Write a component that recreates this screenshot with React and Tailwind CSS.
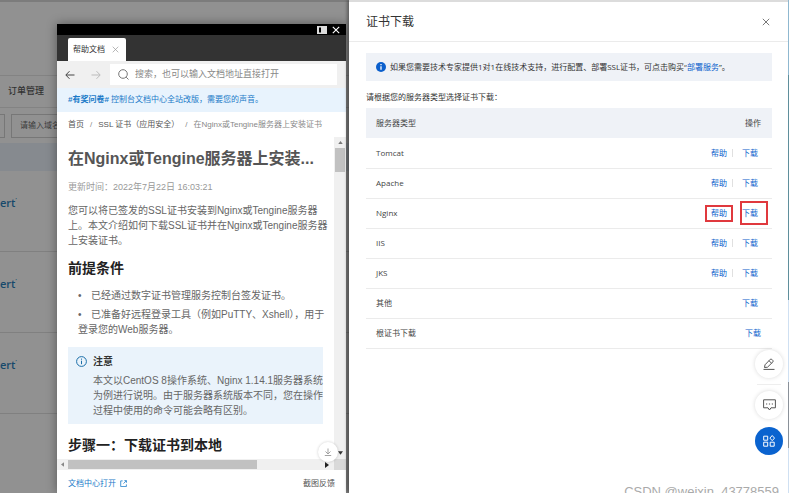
import React from "react";

const rows = [
  { name: "Tomcat", help: true },
  { name: "Apache", help: true },
  { name: "Nginx", help: true, marked: true },
  { name: "IIS", help: true },
  { name: "JKS", help: true },
  { name: "其他" },
  { name: "根证书下载", flush: true },
];

function CloseIcon({ className }) {
  return (
    <svg viewBox="0 0 10 10" className={className} fill="none" stroke="currentColor" aria-hidden="true">
      <path d="M1 1l8 8M9 1l-8 8" />
    </svg>
  );
}

function ConsolePage() {
  return (
    <div className="flex h-full flex-col bg-[#919191] text-[#333]">
      <div className="h-[75px] shrink-0 border-t-2 border-[#7c7c7c]" />
      <nav className="flex h-[33px] shrink-0 items-center border-y border-[#838383] pl-2 text-[9px] font-medium">
        <a href="#orders">订单管理</a>
      </nav>
      <div className="flex h-[35px] shrink-0 items-center gap-[6px]">
        <div className="h-6 w-[5px] border border-l-0 border-[#777]" />
        <input
          aria-label="域名"
          placeholder="请输入域名"
          className="h-6 w-40 border border-[#777] pl-2 text-[8px] placeholder:text-[#3c3c3c]"
        />
      </div>
      <div className="h-7 shrink-0 bg-[#868a8f]" />
      {["a", "b", "c"].map((k) => (
        <div
          key={k}
          className="flex h-[81px] shrink-0 items-center border-b border-[#808080] pb-4 font-['Open_Sans',sans-serif] text-[11px] font-semibold text-[#17496b]"
        >
          ert<sup className="text-[6px]">’</sup>
        </div>
      ))}
    </div>
  );
}

function HelpWindow() {
  return (
    <section className="absolute bottom-0 left-[57px] top-6 flex w-[289px] flex-col bg-white shadow-[0_0_10px_rgba(0,0,0,0.4)]">
      <div className="flex h-[11px] shrink-0 items-center justify-end gap-[5px] bg-black pr-[6px] text-white">
        <button aria-label="停靠">
          <svg viewBox="0 0 10 8" className="block h-2 w-[10px]" aria-hidden="true">
            <rect x="0" y="0" width="10" height="8" fill="#ddd" />
            <rect x="2" y="1.500" width="2" height="5" fill="#000" />
          </svg>
        </button>
        <button aria-label="关闭窗口">
          <CloseIcon className="block h-2 w-2 stroke-[1.4]" />
        </button>
      </div>
      <div className="flex h-[26px] shrink-0 items-end bg-[#333] pl-[11px]">
        <div className="flex h-[23px] w-[58px] items-center justify-between rounded-t-[2px] bg-white pl-[5px] pr-[7px] text-[8px] text-[#333]">
          <span>帮助文档</span>
          <button aria-label="关闭标签" className="text-[#999]">
            <CloseIcon className="block h-[7px] w-[7px]" />
          </button>
        </div>
      </div>
      <div className="flex h-[27px] shrink-0 items-center bg-[#f0f0f0] pl-2 pr-[9px]">
        <button aria-label="后退" className="text-[#444]">
          <svg viewBox="0 0 10 10" className="h-[10px] w-[10px]" fill="none" stroke="currentColor">
            <path d="M9.5 5H1M4.5 1.2L.8 5l3.7 3.8" />
          </svg>
        </button>
        <button aria-label="前进" className="ml-4 text-[#bbb]">
          <svg viewBox="0 0 10 10" className="h-[10px] w-[10px]" fill="none" stroke="currentColor">
            <path d="M.5 5H9M5.5 1.2L9.2 5 5.5 8.800" />
          </svg>
        </button>
        <label className="ml-[9px] flex h-[21px] flex-1 items-center bg-white pl-2">
          <svg viewBox="0 0 11 11" className="h-[11px] w-[11px] shrink-0 text-[#777]" fill="none" stroke="currentColor">
            <circle cx="5" cy="5" r="4.3" />
            <path d="M8.200 8.200L10.500 10.500" />
          </svg>
          <input
            aria-label="搜索"
            placeholder="搜索，也可以输入文档地址直接打开"
            className="ml-[6px] min-w-0 flex-1 text-[9px] outline-none placeholder:text-[#888]"
          />
        </label>
      </div>
      <a href="#survey" className="flex h-6 shrink-0 items-center bg-[#e8f3fd] pl-[11px] text-[8px] text-[#1a7ac8]">
        <b className="mr-[2px]">#有奖问卷#</b>控制台文档中心全站改版，需要您的声音。
      </a>
      <nav className="flex h-[25px] shrink-0 items-center gap-[6px] whitespace-nowrap pl-[11px] text-[8px] text-[#555]">
        <a href="#home">首页</a>
        <span className="text-[#888]">/</span>
        <a href="#ssl">SSL 证书（应用安全）</a>
        <span className="text-[#888]">/</span>
        <span className="text-[#888]">在Nginx或Tengine服务器上安装证书</span>
      </nav>
      <div className="flex min-h-0 flex-1">
        <article className="min-w-0 flex-1 overflow-hidden pl-[11px] pt-[10px] text-[10px] leading-[15px] text-[#666]">
          <h1 className="whitespace-nowrap text-base font-bold leading-6 text-[#555]">在Nginx或Tengine服务器上安装...</h1>
          <p className="mt-2 text-[9px] leading-4 text-[#999]">更新时间：2022年7月22日 16:03:21</p>
          <p className="mt-2 whitespace-nowrap">
            您可以将已签发的SSL证书安装到Nginx或Tengine服务器
            <br />
            上。本文介绍如何下载SSL证书并在Nginx或Tengine服务器
            <br />
            上安装证书。
          </p>
          <h2 className="mt-2 text-sm font-bold leading-6 text-[#222]">前提条件</h2>
          <ul className="mt-2 flex flex-col gap-1 whitespace-nowrap pl-[10px]">
            <li>
              <span className="inline-block w-[13px]">•</span>已经通过数字证书管理服务控制台签发证书。
            </li>
            <li>
              <span className="inline-block w-[13px]">•</span>已准备好远程登录工具（例如PuTTY、Xshell），用于
              <br />
              登录您的Web服务器。
            </li>
          </ul>
          <div className="mr-[11px] mt-[10px] flex gap-[6px] whitespace-nowrap bg-[#eaf3fb] pb-[6px] pl-2 pt-[7px]">
            <svg viewBox="0 0 11 11" className="mt-[2px] h-[11px] w-[11px] shrink-0 text-[#1a6ea8]" fill="none" stroke="currentColor">
              <circle cx="5.5" cy="5.5" r="4.900" />
              <path d="M5.500 4.700v3.500M5.500 2.600v1.100" />
            </svg>
            <div>
              <p className="font-bold text-[#333]">注意</p>
              <p className="mt-1">
                本文以CentOS 8操作系统、Nginx 1.14.1服务器系统
                <br />
                为例进行说明。由于服务器系统版本不同，您在操作
                <br />
                过程中使用的命令可能会略有区别。
              </p>
            </div>
          </div>
          <h2 className="mt-[9px] whitespace-nowrap text-sm font-bold leading-6 text-[#222]">步骤一：下载证书到本地</h2>
        </article>
        <div className="flex w-[12px] shrink-0 flex-col items-center bg-[#f0f0f0]">
          <svg viewBox="0 0 6 4" className="my-1 h-[3px] w-[5px]" aria-hidden="true">
            <path d="M0 4l3-4 3 4z" fill="#777" />
          </svg>
          <div className="h-6 w-[10px] bg-[#c1c1c1]" />
          <svg viewBox="0 0 6 4" className="mb-1 mt-auto h-1 w-[5px]" aria-hidden="true">
            <path d="M0 0l3 4 3-4z" fill="#333" />
          </svg>
        </div>
      </div>
      <div className="flex h-[11px] shrink-0 items-center bg-[#f0f0f0] pl-1">
        <svg viewBox="0 0 4 6" className="h-[5px] w-[3px]" aria-hidden="true">
          <path d="M4 0L0 3l4 3z" fill="#888" />
        </svg>
        <div className="ml-1 h-[9px] w-[189px] bg-[#c1c1c1]" />
        <svg viewBox="0 0 4 6" className="ml-auto h-[6px] w-1" aria-hidden="true">
          <path d="M0 0l4 3-4 3z" fill="#222" />
        </svg>
        <div className="ml-[5px] h-full w-[12px] bg-[#d9d9d9]" />
      </div>
      <footer className="flex h-[23px] shrink-0 items-center justify-between px-[11px] pt-1 text-[8px]">
        <a href="#docs" className="flex items-center gap-1 text-[#1a7ac8]">
          文档中心打开
          <svg viewBox="0 0 8 8" className="h-[7px] w-[7px]" fill="none" stroke="currentColor" strokeWidth="0.900">
            <path d="M3 1H.8v6.500h6.500V5M5 .7h2.400v2.400M7.200.9L4 4.100" />
          </svg>
        </a>
        <button className="text-[#555]">截图反馈</button>
      </footer>
      <button
        aria-label="滚动到底部"
        className="absolute bottom-[31px] right-2 flex h-5 w-5 items-center justify-center rounded-full bg-white text-[#999] shadow-[0_0_3px_rgba(0,0,0,0.2)]"
      >
        <svg viewBox="0 0 8 8" className="h-2 w-2" fill="none" stroke="currentColor" strokeWidth="0.900">
          <path d="M4 .5V6M1.500 3.500L4 6l2.500-2.500M.8 7.500h6.400" />
        </svg>
      </button>
    </section>
  );
}

function DownloadTable() {
  return (
    <table className="w-full text-[8px] leading-3 text-[#444]">
      <thead>
        <tr className="h-[30px] bg-[#eff2f7]">
          <th className="pl-[10px] text-left font-normal">服务器类型</th>
          <th className="pr-[11px] text-right font-normal">操作</th>
        </tr>
      </thead>
      <tbody>
        {rows.map((r) => (
          <tr key={r.name} className="h-[30px] border-b border-[#ebebeb]">
            <td className="pl-[10px]">{r.name}</td>
            <td className={r.flush ? "pr-[11px]" : "pr-[14px]"}>
              <div className="flex items-center justify-end text-[#0b5fcc]">
                {r.help && (
                  <>
                    <a href="#help" className="relative">
                      帮助
                      {r.marked && <span className="absolute -inset-x-[6px] -bottom-[3px] -top-[2px] border-2 border-[#e0393e]" />}
                    </a>
                    <span className={r.marked ? "mx-[5px] h-2 w-[5px]" : "ml-[5px] mr-[9px] h-2 w-px bg-[#e0e0e0]"} />
                  </>
                )}
                <a href="#download" className="relative">
                  下载
                  {r.marked && <span className="absolute -bottom-[6px] -left-[2px] -right-[10px] -top-[6px] border-2 border-[#e0393e]" />}
                </a>
              </div>
            </td>
          </tr>
        ))}
      </tbody>
    </table>
  );
}

function Drawer() {
  return (
    <aside className="absolute inset-y-0 right-0 flex w-[440px] overflow-hidden bg-white font-['Open_Sans','Noto_Sans_CJK_SC',sans-serif] shadow-[-2px_0_3px_rgba(0,0,0,0.35)]">
      <div className="flex min-w-0 flex-1 flex-col border-t-2 border-[#dcdcdc]">
        <header className="flex h-10 shrink-0 items-center justify-between border-b border-[#ebebeb] pl-[17px] pr-[18px]">
          <h2 className="text-xs text-[#333]">证书下载</h2>
          <button aria-label="关闭" className="text-[#555]">
            <CloseIcon className="block h-2 w-2" />
          </button>
        </header>
        <div className="flex flex-col pl-[17px] pr-4 pt-[11px] text-[8px] text-[#333]">
          <div className="flex h-7 items-center whitespace-nowrap bg-[#eff2f7] pl-[10px]">
            <svg viewBox="0 0 10 10" className="mr-1 h-[10px] w-[10px] shrink-0" aria-hidden="true">
              <circle cx="5" cy="5" r="5" fill="#0b5fcc" />
              <path d="M5 4.200v3.600M5 2v1.300" stroke="#fff" strokeWidth="1.300" />
            </svg>
            <p>
              如果您需要技术专家提供1对1在线技术支持，进行配置、部署SSL证书，可点击购买“
              <a href="#deploy" className="text-[#0b5fcc]">部署服务</a>”。
            </p>
          </div>
          <p className="flex h-[27px] items-center pt-[5px]">请根据您的服务器类型选择证书下载：</p>
          <DownloadTable />
        </div>
      </div>
      <div className="flex w-px shrink-0 flex-col bg-[#cfe0f2]">
        <div className="h-[75px] bg-[#8fb8d0]" />
        <div className="h-[225px] bg-[#5f8f9c]" />
        <div className="mt-[82px] h-[66px] bg-[#8a9199]" />
      </div>
      <p className="absolute right-[10px] top-[484px] whitespace-nowrap font-['Liberation_Sans',sans-serif] text-[13px] leading-[15px] text-[#aaa]">
        CSDN @weixin_43778559
      </p>
      <div className="absolute bottom-[38px] right-[6px] flex flex-col items-center">
        <button
          aria-label="编辑"
          className="flex h-7 w-7 items-center justify-center rounded-full bg-white text-[#555] shadow-[0_0_4px_rgba(0,0,0,0.15)]"
        >
          <svg viewBox="0 0 12 12" className="h-3 w-3" fill="none" stroke="currentColor">
            <path d="M1.500 9.500L2 6.800 7.300 1.300Q8 .7 8.700 1.300L9.900 2.500Q10.500 3.200 9.900 3.900L4.500 9.200zM6 2.700l2.600 2.600M.5 11.400h11" />
          </svg>
        </button>
        <div className="my-[6px] h-px w-6 bg-[#eee]" />
        <button
          aria-label="消息"
          className="flex h-7 w-7 items-center justify-center rounded-full bg-white text-[#555] shadow-[0_0_4px_rgba(0,0,0,0.15)]"
        >
          <svg viewBox="0 0 13 12" className="h-3 w-[13px]" fill="none" stroke="currentColor">
            <path d="M.6.800h11.800v8H8L6.500 11 5 8.800H.6z" />
            <path d="M3 5h1.200M5.900 5h1.200M8.800 5H10" strokeWidth="1.200" />
          </svg>
        </button>
        <button
          aria-label="应用"
          className="mt-2 flex h-7 w-7 items-center justify-center rounded-full bg-[#0a63cf] text-white"
        >
          <svg viewBox="0 0 12 12" className="h-3 w-3" fill="none" stroke="currentColor">
            <path d="M.7 1.200h4v4h-4zM.7 7.200h4v4h-4zM7.200 7.200h4v4h-4zM9.200.5l2.300 2.600-2.300 2.600L6.900 3.100z" />
          </svg>
        </button>
      </div>
    </aside>
  );
}

export default function App() {
  return (
    <main
      lang="zh-CN"
      className="relative h-screen overflow-hidden font-['Liberation_Sans','Noto_Sans_CJK_SC',sans-serif]"
    >
      <ConsolePage />
      <HelpWindow />
      <Drawer />
    </main>
  );
}
